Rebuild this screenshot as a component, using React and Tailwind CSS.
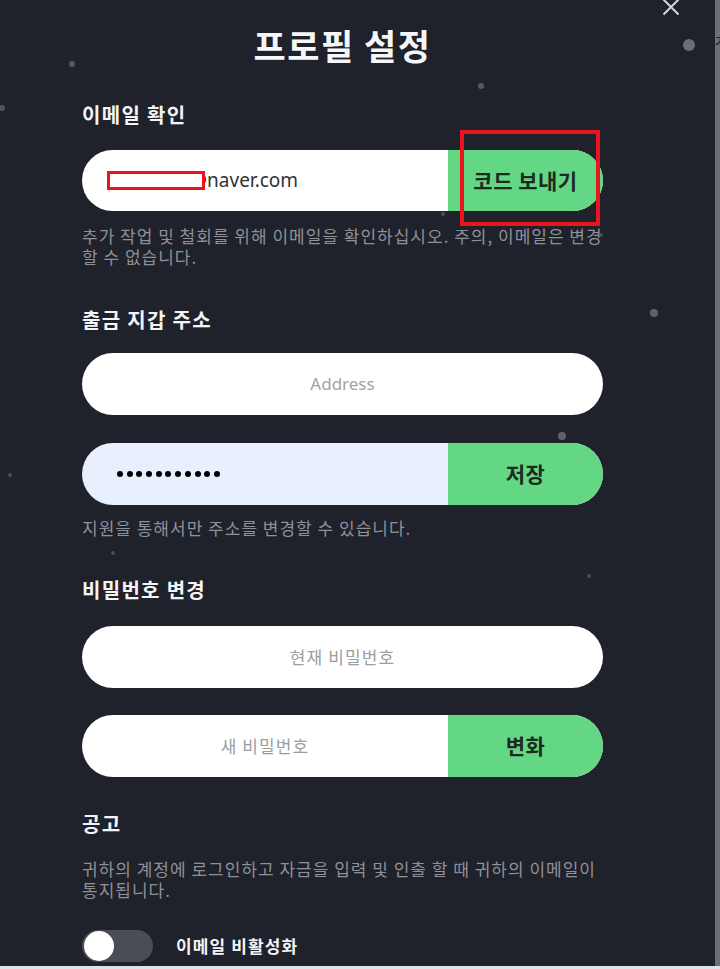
import React from "react";

const KR = { fontFamily: '"Noto Sans CJK KR", "Noto Sans", sans-serif' };
const LAT = { fontFamily: '"Noto Sans", "Noto Sans CJK KR", sans-serif' };

const dots = [
  { x: 72, y: 64, r: 3, c: "#55585f" },
  { x: 481, y: 86, r: 3, c: "#55585f" },
  { x: 689, y: 45, r: 6, c: "#6b6e74" },
  { x: 2, y: 108, r: 3, c: "#4f525a" },
  { x: 188, y: 186, r: 3, c: "#4f525a" },
  { x: 654, y: 313, r: 4, c: "#5f6268" },
  { x: 562, y: 436, r: 4, c: "#5f6268" },
  { x: 10, y: 475, r: 2, c: "#4a4d55" },
  { x: 113, y: 553, r: 2, c: "#4a4d55" },
  { x: 589, y: 576, r: 2, c: "#4a4d55" },
  { x: 443, y: 214, r: 2, c: "#4a4d55" },
  { x: 601, y: 235, r: 2, c: "#4a4d55" },
];

function Heading({ children, className }) {
  return (
    <div
      className={"h-[28px] leading-[28px] text-[20px] font-bold tracking-[1.3px] text-[#f3f4f6] " + className}
      style={KR}
    >
      {children}
    </div>
  );
}

function GreenBtn({ children }) {
  return (
    <div
      className="w-[155px] h-full bg-[#64d784] flex items-center justify-center text-[21px] font-bold tracking-[0.5px] text-[#1c2a21]"
      style={KR}
    >
      {children}
    </div>
  );
}

export default function App() {
  return (
    <div className="relative w-[720px] h-[969px] overflow-hidden bg-[#1f212b] flex flex-col">
      <div className="flex-1 flex">
        <div className="relative flex-1">
          {dots.map((d, i) => (
            <div
              key={i}
              className="absolute rounded-full"
              style={{
                left: d.x - d.r,
                top: d.y - d.r,
                width: d.r * 2,
                height: d.r * 2,
                background: d.c,
              }}
            />
          ))}

          {/* close icon */}
          <svg
            className="absolute left-[662px] top-[-2px]"
            width="18"
            height="18"
            viewBox="0 0 18 18"
            fill="none"
            stroke="#d4d6da"
            strokeWidth="2"
          >
            <path d="M1.5 1.5 L16.5 16.5 M16.5 1.5 L1.5 16.5" />
          </svg>

          <div className="ml-[82px] w-[521px] flex flex-col">
            <div
              className="mt-[25px] h-[40px] leading-[40px] text-center text-[35px] font-bold tracking-[1.5px] text-[#f5f6f8]"
              style={KR}
            >
              프로필 설정
            </div>

            <Heading className="mt-[36px]">이메일 확인</Heading>

            <div className="relative mt-[21px] h-[61px] rounded-full overflow-hidden flex bg-white">
              <div className="relative flex-1 flex items-center pl-[25px]">
                <span className="inline-block w-[83px]" />
                <span className="text-[19px] text-[#333333]" style={LAT}>
                  @naver.com
                </span>
                <div className="absolute left-[25px] top-[21px] w-[98px] h-[19px] border-[3px] border-[#e8151d] bg-white" />
              </div>
              <GreenBtn>코드 보내기</GreenBtn>
            </div>

            <div className="mt-[14px] text-[17px] leading-[21px] tracking-[1px] text-[#8f9197] whitespace-nowrap" style={KR}>
              <div>추가 작업 및 철회를 위해 이메일을 확인하십시오. 주의, 이메일은 변경</div>
              <div>할 수 없습니다.</div>
            </div>

            <Heading className="mt-[39px]">출금 지갑 주소</Heading>

            <div
              className="mt-[19px] h-[62px] rounded-full bg-white flex items-center justify-center text-[17px] text-[#a0a3a8]"
              style={LAT}
            >
              Address
            </div>

            <div className="mt-[28px] h-[62px] rounded-full overflow-hidden flex bg-[#e8f0fe]">
              <div className="flex-1 flex items-center gap-[3.7px] pl-[35px]">
                {Array.from({ length: 11 }).map((_, i) => (
                  <span key={i} className="w-[6px] h-[6px] rounded-full bg-black" />
                ))}
              </div>
              <GreenBtn>저장</GreenBtn>
            </div>

            <div className="mt-[12px] text-[17px] leading-[21px] tracking-[1px] text-[#8f9197]" style={KR}>
              지원을 통해서만 주소를 변경할 수 있습니다.
            </div>

            <Heading className="mt-[38px]">비밀번호 변경</Heading>

            <div
              className="mt-[22px] h-[62px] rounded-full bg-white flex items-center justify-center text-[17px] tracking-[1.1px] text-[#9a9da3]"
              style={KR}
            >
              현재 비밀번호
            </div>

            <div className="mt-[27px] h-[62px] rounded-full overflow-hidden flex bg-white">
              <div
                className="flex-1 flex items-center justify-center text-[17px] tracking-[1.1px] text-[#9a9da3]"
                style={KR}
              >
                새 비밀번호
              </div>
              <GreenBtn>변화</GreenBtn>
            </div>

            <Heading className="mt-[33px]">공고</Heading>

            <div className="mt-[20px] text-[17px] leading-[21px] tracking-[1px] text-[#8f9197] whitespace-nowrap" style={KR}>
              <div>귀하의 계정에 로그인하고 자금을 입력 및 인출 할 때 귀하의 이메일이</div>
              <div>통지됩니다.</div>
            </div>

            <div className="mt-[30px] flex items-center">
              <div className="relative w-[71px] h-[32px] rounded-full bg-[#4b4d54]">
                <div className="absolute left-[2px] top-[1px] w-[30px] h-[30px] rounded-full bg-white" />
              </div>
              <span className="ml-[23px] text-[17px] font-bold tracking-[1.1px] text-[#f3f4f6]" style={KR}>
                이메일 비활성화
              </span>
            </div>
          </div>

          {/* annotation box */}
          <div className="absolute left-[460px] top-[130px] w-[140px] h-[96px] border-[4px] border-[#e8151d]" />
        </div>
        <div className="relative w-[5px] bg-[#6b7077] overflow-hidden">
          <span className="absolute left-[-2px] top-[28px] text-[16px] text-[#1f212b]" style={KR}>
            ㅈ
          </span>
        </div>
      </div>
      <div className="h-[3px] bg-[#dbe3ea]" />
    </div>
  );
}
